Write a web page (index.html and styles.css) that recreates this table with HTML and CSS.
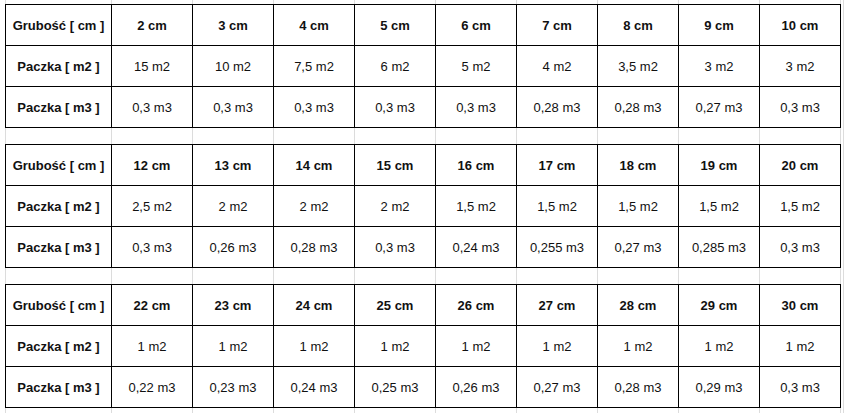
FILE: index.html
```html
<!DOCTYPE html>
<html lang="pl">
<head>
<meta charset="utf-8">
<title>Tabela paczek</title>
<link rel="stylesheet" href="styles.css">
</head>
<body>
<div class="sheet">
  <div class="gap gap-top"><i></i><i></i><i></i><i></i><i></i><i></i><i></i><i></i><i></i><i></i></div>

  <div class="block">
    <div class="c b">Grubość [ cm ]</div>
    <div class="c b">2 cm</div><div class="c b">3 cm</div><div class="c b">4 cm</div><div class="c b">5 cm</div><div class="c b">6 cm</div><div class="c b">7 cm</div><div class="c b">8 cm</div><div class="c b">9 cm</div><div class="c b">10 cm</div>
    <div class="c b">Paczka [ m2 ]</div>
    <div class="c">15 m2</div><div class="c">10 m2</div><div class="c">7,5 m2</div><div class="c">6 m2</div><div class="c">5 m2</div><div class="c">4 m2</div><div class="c">3,5 m2</div><div class="c">3 m2</div><div class="c">3 m2</div>
    <div class="c b">Paczka [ m3 ]</div>
    <div class="c">0,3 m3</div><div class="c">0,3 m3</div><div class="c">0,3 m3</div><div class="c">0,3 m3</div><div class="c">0,3 m3</div><div class="c">0,28 m3</div><div class="c">0,28 m3</div><div class="c">0,27 m3</div><div class="c">0,3 m3</div>
  </div>

  <div class="gap gap-mid"><i></i><i></i><i></i><i></i><i></i><i></i><i></i><i></i><i></i><i></i></div>

  <div class="block">
    <div class="c b">Grubość [ cm ]</div>
    <div class="c b">12 cm</div><div class="c b">13 cm</div><div class="c b">14 cm</div><div class="c b">15 cm</div><div class="c b">16 cm</div><div class="c b">17 cm</div><div class="c b">18 cm</div><div class="c b">19 cm</div><div class="c b">20 cm</div>
    <div class="c b">Paczka [ m2 ]</div>
    <div class="c">2,5 m2</div><div class="c">2 m2</div><div class="c">2 m2</div><div class="c">2 m2</div><div class="c">1,5 m2</div><div class="c">1,5 m2</div><div class="c">1,5 m2</div><div class="c">1,5 m2</div><div class="c">1,5 m2</div>
    <div class="c b">Paczka [ m3 ]</div>
    <div class="c">0,3 m3</div><div class="c">0,26 m3</div><div class="c">0,28 m3</div><div class="c">0,3 m3</div><div class="c">0,24 m3</div><div class="c">0,255 m3</div><div class="c">0,27 m3</div><div class="c">0,285 m3</div><div class="c">0,3 m3</div>
  </div>

  <div class="gap gap-mid"><i></i><i></i><i></i><i></i><i></i><i></i><i></i><i></i><i></i><i></i></div>

  <div class="block">
    <div class="c b">Grubość [ cm ]</div>
    <div class="c b">22 cm</div><div class="c b">23 cm</div><div class="c b">24 cm</div><div class="c b">25 cm</div><div class="c b">26 cm</div><div class="c b">27 cm</div><div class="c b">28 cm</div><div class="c b">29 cm</div><div class="c b">30 cm</div>
    <div class="c b">Paczka [ m2 ]</div>
    <div class="c">1 m2</div><div class="c">1 m2</div><div class="c">1 m2</div><div class="c">1 m2</div><div class="c">1 m2</div><div class="c">1 m2</div><div class="c">1 m2</div><div class="c">1 m2</div><div class="c">1 m2</div>
    <div class="c b">Paczka [ m3 ]</div>
    <div class="c">0,22 m3</div><div class="c">0,23 m3</div><div class="c">0,24 m3</div><div class="c">0,25 m3</div><div class="c">0,26 m3</div><div class="c">0,27 m3</div><div class="c">0,28 m3</div><div class="c">0,29 m3</div><div class="c">0,3 m3</div>
  </div>

  <div class="gap gap-bottom"><i></i><i></i><i></i><i></i><i></i><i></i><i></i><i></i><i></i><i></i></div>
</div>
</body>
</html>
```

FILE: styles.css
```css
html, body {
  margin: 0;
  padding: 0;
  background: #ffffff;
}

body {
  font-family: "Liberation Sans", Arial, sans-serif;
  font-size: 13px;
  color: #111111;
  height: 413px;
  overflow: hidden;
}

.sheet {
  margin-left: 5px;
  width: 839px;
  box-sizing: border-box;
  border-right: 1px solid #dcdcdc;
  display: flex;
  flex-direction: column;
}

.block {
  display: grid;
  grid-template-columns: 106px repeat(9, 81px);
  grid-auto-rows: 41px;
  width: 836px;
  box-sizing: border-box;
  border-top: 1px solid #000;
  border-left: 1px solid #000;
}

.c {
  box-sizing: border-box;
  border-right: 1px solid #000;
  border-bottom: 1px solid #000;
  display: flex;
  align-items: center;
  justify-content: center;
  white-space: nowrap;
  padding-top: 1px;
}

.b {
  font-weight: bold;
}

.gap {
  display: grid;
  grid-template-columns: 106px repeat(9, 81px);
  width: 836px;
  box-sizing: border-box;
  border-left: 1px solid #dcdcdc;
}

.gap i {
  display: block;
  box-sizing: border-box;
  border-right: 1px solid #dcdcdc;
}

.gap-top {
  height: 4px;
}

.gap-mid {
  height: 16px;
}

.gap-bottom {
  height: 6px;
}
```
